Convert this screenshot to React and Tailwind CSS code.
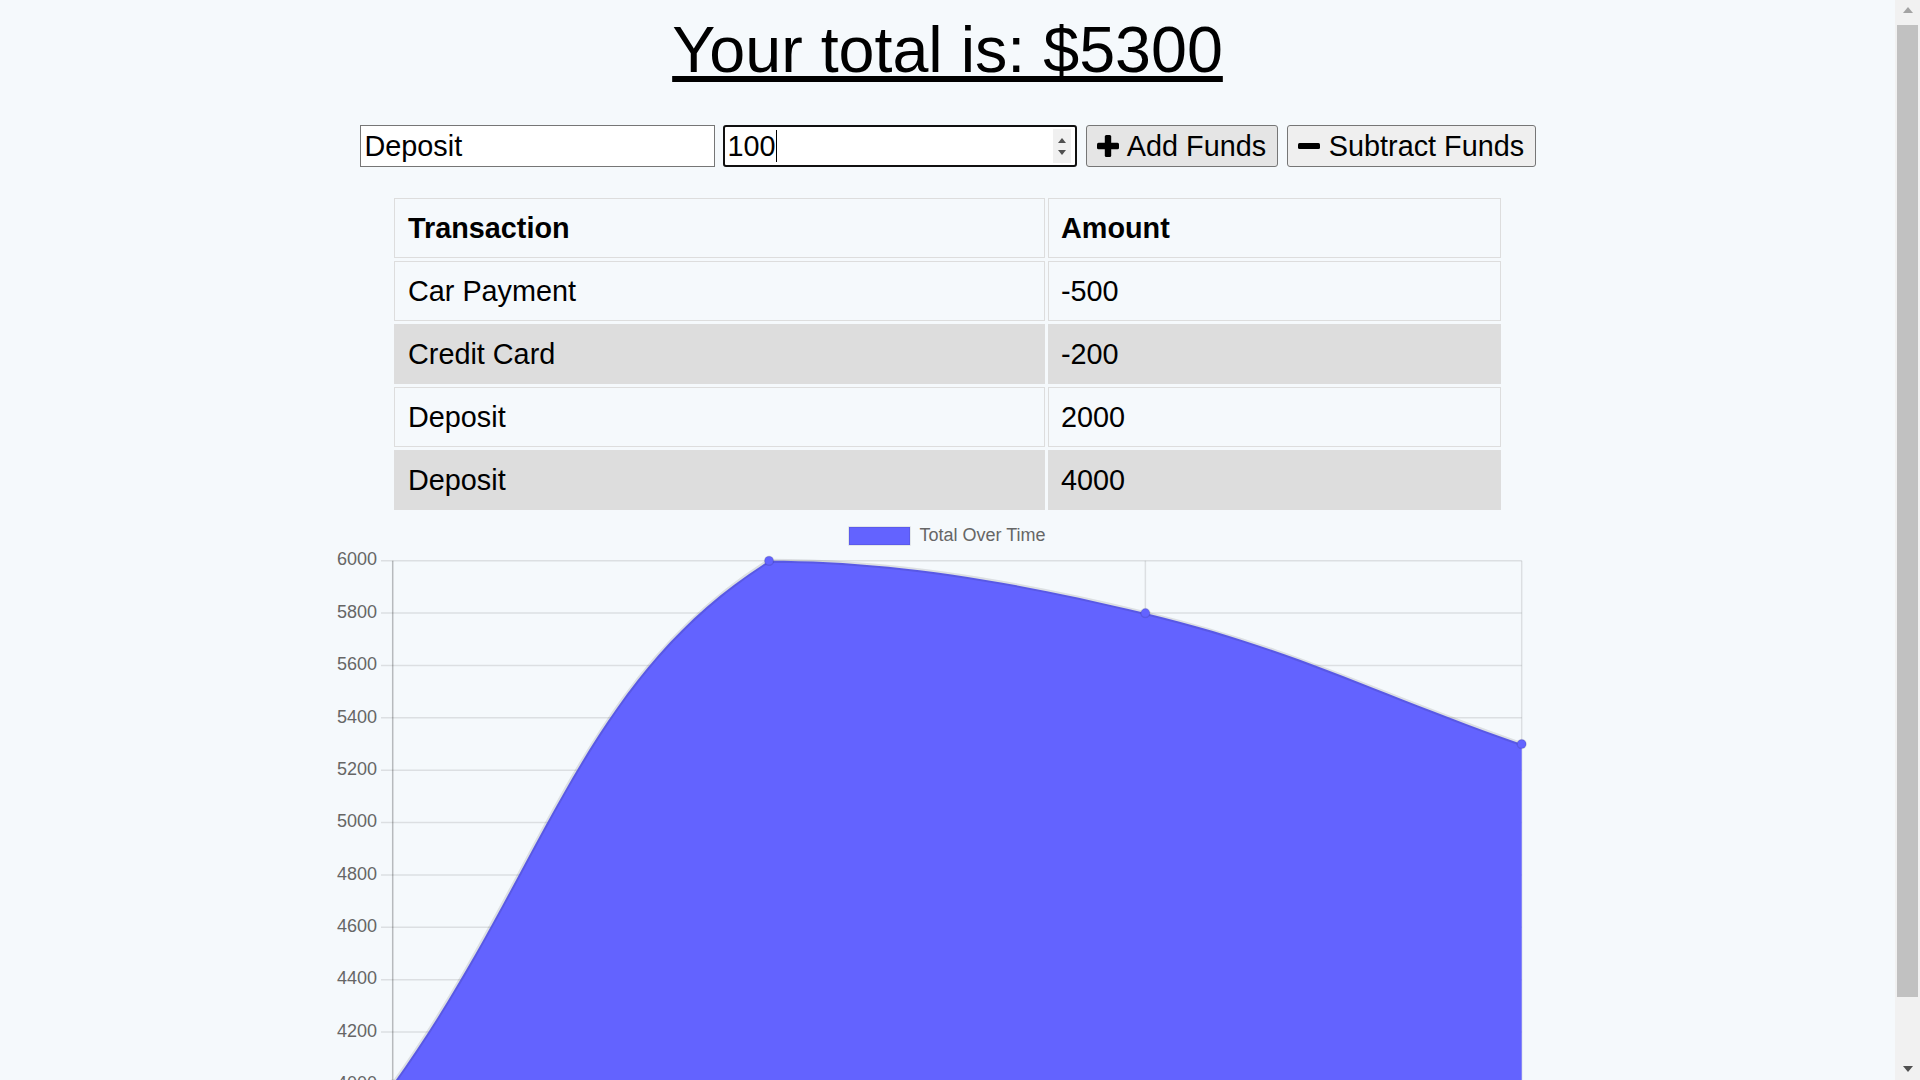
import React from "react";

const transactions = [
  { name: "Car Payment", amount: -500 },
  { name: "Credit Card", amount: -200 },
  { name: "Deposit", amount: 2000 },
  { name: "Deposit", amount: 4000 },
];

// chart area in page pixels
const area = { left: 392.7, right: 1521.7, top: 560.7, bottom: 1084.5 };
const yMin = 4000;
const yMax = 6000;
const totals = [4000, 6000, 5800, 5300];

const clamp = (v, lo, hi) => Math.max(lo, Math.min(hi, v));

const buildPoints = () => {
  const step = (area.right - area.left) / (totals.length - 1);
  return totals.map((v, i) => ({
    x: area.left + i * step,
    y: area.bottom - ((v - yMin) / (yMax - yMin)) * (area.bottom - area.top),
  }));
};

// same spline as chart.js (tension 0.4), control points capped to the area
const buildPath = (pts, t = 0.4) => {
  const ctrl = pts.map((cur, i) => {
    const prev = pts[i - 1] || cur;
    const next = pts[i + 1] || cur;
    const d01 = Math.hypot(cur.x - prev.x, cur.y - prev.y);
    const d12 = Math.hypot(next.x - cur.x, next.y - cur.y);
    let s01 = d01 / (d01 + d12);
    let s12 = d12 / (d01 + d12);
    s01 = isNaN(s01) ? 0 : s01;
    s12 = isNaN(s12) ? 0 : s12;
    const fa = t * s01;
    const fb = t * s12;
    return {
      px: clamp(cur.x - fa * (next.x - prev.x), area.left, area.right),
      py: clamp(cur.y - fa * (next.y - prev.y), area.top, area.bottom),
      nx: clamp(cur.x + fb * (next.x - prev.x), area.left, area.right),
      ny: clamp(cur.y + fb * (next.y - prev.y), area.top, area.bottom),
    };
  });
  let d = `M${pts[0].x},${pts[0].y}`;
  for (let i = 1; i < pts.length; i++) {
    const a = ctrl[i - 1];
    const b = ctrl[i];
    d += ` C${a.nx},${a.ny} ${b.px},${b.py} ${pts[i].x},${pts[i].y}`;
  }
  return d;
};

const TotalChart = () => {
  const pts = buildPoints();
  const line = buildPath(pts);
  const fill = `${line} L${pts[pts.length - 1].x},${area.bottom} L${pts[0].x},${area.bottom} Z`;
  const ticks = [];
  for (let i = 0; i <= 10; i++) {
    const v = yMax - i * 200;
    const y = area.top + (i * (area.bottom - area.top)) / 10;
    ticks.push({ v, y });
  }

  return (
    <svg
      width="1261"
      height="653"
      viewBox="317 513 1261 653"
      className="block"
      fontFamily="'Liberation Sans', Arial, sans-serif"
    >
      {/* legend */}
      <rect x="849" y="527" width="61" height="18" fill="#6363ff" stroke="rgba(0,0,0,0.1)" strokeWidth="1.5" />
      <text x="919.5" y="536" dominantBaseline="middle" fontSize="18" fill="#666">
        Total Over Time
      </text>

      {/* grid */}
      {ticks.map((tk) => (
        <line key={tk.v} x1="381" x2={area.right} y1={tk.y} y2={tk.y} stroke="rgba(0,0,0,0.1)" strokeWidth="1.5" />
      ))}
      {pts.slice(1).map((p) => (
        <line key={p.x} x1={p.x} x2={p.x} y1={area.top} y2={area.bottom + 12} stroke="rgba(0,0,0,0.1)" strokeWidth="1.5" />
      ))}
      <line x1={area.left} x2={area.left} y1={area.top} y2={area.bottom + 12} stroke="rgba(0,0,0,0.25)" strokeWidth="1.5" />

      {/* data */}
      <path d={fill} fill="#6363ff" />
      <path d={line} fill="none" stroke="rgba(0,0,0,0.1)" strokeWidth="4" />
      {pts.map((p) => (
        <circle key={p.x} cx={p.x} cy={p.y} r="4.5" fill="#6363ff" stroke="rgba(0,0,0,0.1)" strokeWidth="1.5" />
      ))}

      {/* y labels */}
      {ticks.map((tk) => (
        <text key={tk.v} x="377" y={tk.y} textAnchor="end" dominantBaseline="middle" fontSize="18" fill="#666">
          {tk.v}
        </text>
      ))}
    </svg>
  );
};

const PlusIcon = () => (
  <svg width="22" height="22" viewBox="0 0 22 22">
    <rect x="7.8" y="0" width="6.4" height="22" rx="1.5" fill="#000" />
    <rect x="0" y="7.8" width="22" height="6.4" rx="1.5" fill="#000" />
  </svg>
);

const MinusIcon = () => (
  <svg width="22" height="22" viewBox="0 0 22 22">
    <rect x="0" y="8" width="22" height="6" rx="1.5" fill="#000" />
  </svg>
);

// page scrollbar as seen in the window
const Scrollbar = () => (
  <div className="fixed right-0 top-0 flex h-screen w-[25px] flex-col items-center bg-[#f1f1f1]">
    <svg width="10" height="6" viewBox="0 0 10 6" className="mt-[7px]">
      <path d="M0 6 L5 0 L10 6 Z" fill="#a3a3a3" />
    </svg>
    <div className="mt-[12px] h-[972px] w-[21px] bg-[#c1c1c1]" />
    <div className="flex-1" />
    <svg width="10" height="6" viewBox="0 0 10 6" className="mb-[8px]">
      <path d="M0 0 L10 0 L5 6 Z" fill="#505050" />
    </svg>
  </div>
);

const App = () => {
  return (
    <div className="min-h-screen bg-[#f5f9fc] font-['Liberation_Sans',Arial,sans-serif] text-black">
      <div className="flex flex-col items-center pr-[25px]">
        <h1 className="pt-[13px] text-[64.6px] leading-[74px] underline">Your total is: $5300</h1>

        <div className="mt-[38px] flex h-[42px] text-[28.8px] leading-[33px]">
          <input
            type="text"
            defaultValue="Deposit"
            className="h-[42px] w-[355px] border border-[#767676] bg-white pl-[4px] outline-none"
          />
          <div className="ml-[8px] flex h-[42px] w-[354px] items-center rounded-[3px] border-2 border-[#101010] bg-white pl-[3px] pr-[4px]">
            <span>100</span>
            <span className="h-[32px] w-px bg-black" />
            <span className="flex-1" />
            <span className="flex h-[34px] w-[18px] flex-col items-center justify-center gap-[7px] bg-[#f0f0f0]">
              <svg width="8" height="5" viewBox="0 0 8 5">
                <path d="M0 5 L4 0 L8 5 Z" fill="#505050" />
              </svg>
              <svg width="8" height="5" viewBox="0 0 8 5">
                <path d="M0 0 L8 0 L4 5 Z" fill="#505050" />
              </svg>
            </span>
          </div>
          <button
            type="button"
            className="ml-[9px] flex h-[42px] w-[192px] items-center justify-center gap-[8px] rounded-[3px] border border-[#767676] bg-[#e5e5e5]"
          >
            <PlusIcon />
            <span>Add Funds</span>
          </button>
          <button
            type="button"
            className="ml-[9px] flex h-[42px] w-[249px] items-center justify-center gap-[9px] rounded-[3px] border border-[#767676] bg-[#efefef]"
          >
            <MinusIcon />
            <span>Subtract Funds</span>
          </button>
        </div>

        <table className="mt-[28px] w-[1113px] table-fixed border-separate border-spacing-[3px] text-left text-[28.8px] leading-[34px]">
          <colgroup>
            <col className="w-[651px]" />
            <col className="w-[453px]" />
          </colgroup>
          <thead>
            <tr>
              <th className="border border-[#dddddd] px-[13px] py-[12px] font-bold">Transaction</th>
              <th className="border border-[#dddddd] px-[12px] py-[12px] font-bold">Amount</th>
            </tr>
          </thead>
          <tbody>
            {transactions.map((t, i) => {
              const shade = i % 2 === 1 ? "bg-[#dddddd]" : "";
              return (
                <tr key={i}>
                  <td className={`border border-[#dddddd] px-[13px] py-[12px] ${shade}`}>{t.name}</td>
                  <td className={`border border-[#dddddd] px-[12px] py-[12px] ${shade}`}>{t.amount}</td>
                </tr>
              );
            })}
          </tbody>
        </table>

        <TotalChart />
      </div>
      <Scrollbar />
    </div>
  );
};

export default App;
